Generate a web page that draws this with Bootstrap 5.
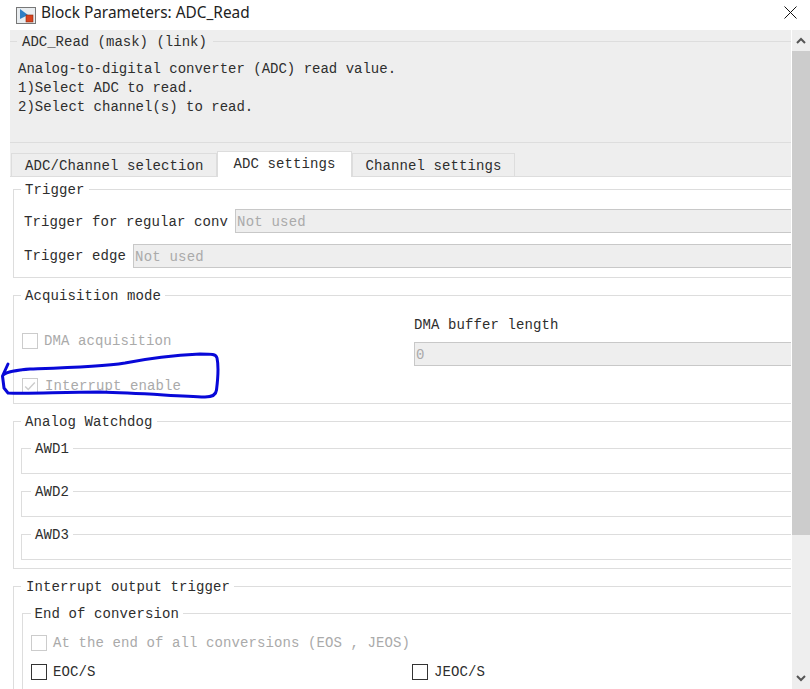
<!DOCTYPE html>
<html lang="en">
<head>
<meta charset="utf-8">
<title>Block Parameters: ADC_Read</title>
<link href="https://cdn.jsdelivr.net/npm/bootstrap@5.3.0/dist/css/bootstrap.min.css" rel="stylesheet">
<style>
html,body{height:689px;width:810px;overflow:hidden;background:#fff}
body{position:relative;font-family:"Liberation Mono",monospace;font-size:14px;line-height:19px;letter-spacing:.1px;color:#2e2e2e}
.titlebar{height:30px;padding:0 0 5px 16px;gap:5px;font-family:"Noto Sans",sans-serif;font-size:15.400px;letter-spacing:0;color:#222}
.titlebar svg:first-child{margin-top:5px}
.win-close{margin-left:auto;margin-right:13px;display:block}
.client{height:659px}
.pane{width:781px;margin-left:10px;overflow:hidden}
.sbar{width:18px;margin-left:1px;background:#eee}
.sb-btn{height:21px}
.sb-thumb{height:484px;background:#ccc}
.masktop{background:#eee;height:147px;padding-top:1px}
.gbox{border:1px solid #ddd;margin:0;padding:0;min-width:0}
.gbox>legend{float:none;width:auto;font-size:14px;line-height:22px;height:20px;margin:0 0 0 7px;padding:0 4px;color:#2e2e2e}
.gmask{border-width:1px 0;height:112px;padding-top:9px;letter-spacing:0}
.gmask>legend{padding:0 6px 0 5px}
.nav-tabs.tabrow{height:34px;padding:8px 0 0 1px;border-bottom:1px solid #ddd;align-items:flex-end;--bs-nav-tabs-border-width:0}
.tabrow .nav-link{height:23px;padding:3px 12px 1px 13px;border:1px solid #ddd;border-bottom:0;border-radius:0;margin:0;color:#2e2e2e;background:#eee;line-height:19px}
.tabrow .nav-link.active{height:26px;padding:3px 15px 2px 16px;background:#fff;color:#2e2e2e;margin-bottom:-1px;border-color:#ddd}
.formarea{padding:2px 0 0 3px}
.outer{margin-right:-20px;margin-bottom:7px}
.g-trigger{height:99px;padding-top:10px}
.g-acq{height:119px}
.g-wd{height:158px}
.wd-inner{padding:7px 0 0 7px}
.g-awd{height:36px;margin-bottom:7px}
.g-awd>legend{margin-left:9px}
.g-int{height:200px}
.g-int>legend{padding-left:5px}
.int-inner{padding:7px 0 0 8px}
.g-eoc{height:100px}
.g-eoc>legend{margin-left:8px;padding-left:3.500px}
.eoc-inner{padding:4px 0 0 8px}
.prow{height:24px;margin-bottom:11px;padding-left:10px;gap:7px;white-space:nowrap}
.prow>span{padding-top:2px}
.prow.second>span{padding-top:0}
.form-control.wfield{flex:1 1 auto;width:auto;height:24px;border:1px solid #c8c8c8;border-radius:0;padding:2px 1px 0;font-size:14px;line-height:20px;letter-spacing:.2px;color:#aaa;background:#eee;font-family:inherit;opacity:1}
.acq-left{width:400px;padding:26px 0 0 8px}
.acq-right{flex:1 1 auto;padding:11px 0 0}
.acq-right .form-control.wfield{height:24px;margin-top:7px}
.chk{gap:6px;height:19px;white-space:nowrap}
.chk .form-check-input{width:16px;height:16px;margin:0;border:1px solid #333;border-radius:0;flex:none;background-color:#fff;opacity:1}
.chk .form-check-input:disabled{border-color:#ccc}
.chk .form-check-input:checked{background-color:#fff;background-image:url("data:image/svg+xml,%3Csvg xmlns='http://www.w3.org/2000/svg' viewBox='0 0 16 16'%3E%3Cpath d='M2.5 8.5l3.5 3.5 7.5-8' fill='none' stroke='%23ccc' stroke-width='1.6'/%3E%3C/svg%3E")}
.chk .form-check-label{opacity:1;color:#2e2e2e;padding-top:2px}
.chk .form-check-input:disabled~.form-check-label{opacity:1;color:#aaa}
.chk-gap{margin-top:26px}
.chk-gap{gap:7px}
.chk-a{margin-top:6px}
.chk-b{margin-top:10px}
.eoc-left{width:381px}
.ink{position:absolute;left:0;top:0;pointer-events:none}
</style>
</head>
<body>
<div class="titlebar d-flex align-items-center">
  <svg width="20" height="17" viewBox="0 0 20 17"><rect x=".5" y=".5" width="19" height="16" fill="#e9edf0" stroke="#777"/><path d="M4 2l8 6-8 4z" fill="#2f7fc4"/><rect x="10" y="8" width="7" height="7" fill="#d8431f" stroke="#8a2a10" stroke-width=".6"/></svg>
  <span>Block Parameters: ADC_Read</span>
  <svg class="win-close" width="13" height="13" viewBox="0 0 13 13"><path d="M.5.5l12 12M12.5.5l-12 12" stroke="#111" stroke-width="1" fill="none"/></svg>
</div>
<div class="client d-flex">
  <div class="pane">
    <div class="masktop">
      <fieldset class="gbox gmask">
        <legend>ADC_Read (mask) (link)</legend>
        <div class="px-2">Analog-to-digital converter (ADC) read value.<br>1)Select ADC to read.<br>2)Select channel(s) to read.</div>
      </fieldset>
      <ul class="nav nav-tabs tabrow">
        <li class="nav-item"><a class="nav-link" href="#">ADC/Channel selection</a></li>
        <li class="nav-item"><a class="nav-link active" href="#">ADC settings</a></li>
        <li class="nav-item"><a class="nav-link" href="#">Channel settings</a></li>
      </ul>
    </div>
    <div class="formarea">
      <fieldset class="gbox outer g-trigger">
        <legend>Trigger</legend>
        <div class="d-flex align-items-center prow"><span>Trigger for regular conv</span><input class="form-control wfield" disabled value="Not used"></div>
        <div class="d-flex align-items-center prow second"><span>Trigger edge</span><input class="form-control wfield" disabled value="Not used"></div>
      </fieldset>
      <fieldset class="gbox outer g-acq">
        <legend>Acquisition mode</legend>
        <div class="d-flex">
          <div class="acq-left">
            <div class="d-flex align-items-center chk"><input class="form-check-input" type="checkbox" disabled id="c1"><label class="form-check-label" for="c1">DMA acquisition</label></div>
            <div class="d-flex align-items-center chk chk-gap"><input class="form-check-input" type="checkbox" disabled checked id="c2"><label class="form-check-label" for="c2">Interrupt enable</label></div>
          </div>
          <div class="acq-right">
            <div>DMA buffer length</div>
            <div class="d-flex"><input class="form-control wfield" disabled value="0"></div>
          </div>
        </div>
      </fieldset>
      <fieldset class="gbox outer g-wd">
        <legend>Analog Watchdog</legend>
        <div class="wd-inner">
          <fieldset class="gbox g-awd"><legend>AWD1</legend></fieldset>
          <fieldset class="gbox g-awd"><legend>AWD2</legend></fieldset>
          <fieldset class="gbox g-awd"><legend>AWD3</legend></fieldset>
        </div>
      </fieldset>
      <fieldset class="gbox outer g-int">
        <legend>Interrupt output trigger</legend>
        <div class="int-inner">
          <fieldset class="gbox g-eoc">
            <legend>End of conversion</legend>
            <div class="eoc-inner">
              <div class="d-flex align-items-center chk chk-a"><input class="form-check-input" type="checkbox" disabled id="c3"><label class="form-check-label" for="c3">At the end of all conversions (EOS , JEOS)</label></div>
              <div class="d-flex chk-b">
                <div class="d-flex align-items-center chk eoc-left"><input class="form-check-input" type="checkbox" id="c4"><label class="form-check-label" for="c4">EOC/S</label></div>
                <div class="d-flex align-items-center chk"><input class="form-check-input" type="checkbox" id="c5"><label class="form-check-label" for="c5">JEOC/S</label></div>
              </div>
            </div>
          </fieldset>
        </div>
      </fieldset>
    </div>
  </div>
  <div class="sbar d-flex flex-column">
    <div class="sb-btn d-flex align-items-center justify-content-center"><svg width="10" height="7" viewBox="0 0 10 7"><path d="M1 6l4-4 4 4" fill="none" stroke="#555" stroke-width="2"/></svg></div>
    <div class="sb-thumb"></div>
    <div class="flex-grow-1"></div>
    <div class="sb-btn d-flex align-items-center justify-content-center"><svg width="10" height="7" viewBox="0 0 10 7"><path d="M1 1l4 4 4-4" fill="none" stroke="#555" stroke-width="2"/></svg></div>
  </div>
</div>
<svg class="ink" width="810" height="689" viewBox="0 0 810 689"><path d="M8 364L2.500 376L4 388L8 393C30 394 60 392 100 392C140 393 175 396 205 397C212 397 216 395 216.500 390C218 378 218.500 365 217 358C216 354 212 354 200 354C180 355 150 358 125 363C100 367 60 368 30 369C18 370 8 371 3 375" fill="none" stroke="#0808d8" stroke-width="3" stroke-linecap="round" stroke-linejoin="round"/></svg>
</body>
</html>
